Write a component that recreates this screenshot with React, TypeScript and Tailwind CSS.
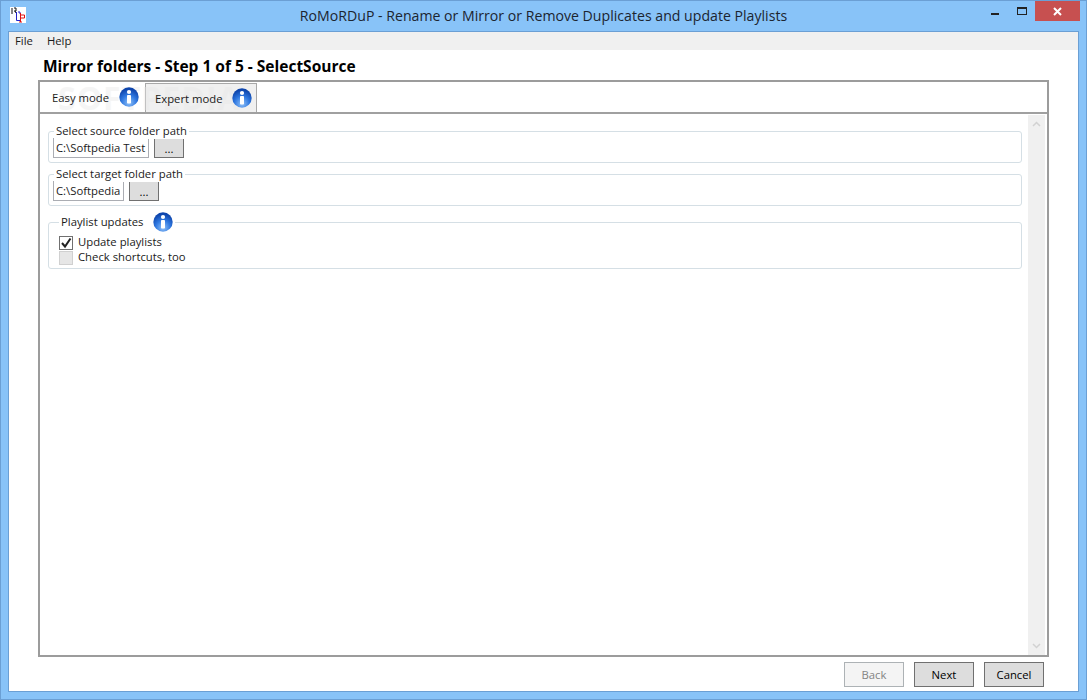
const font = "font-['Open_Sans','Noto_Sans',sans-serif]";

function Info({ className = "" }: { className?: string }) {
  return (
    <svg width="20" height="20" viewBox="0 0 20 20" className={className}>
      <defs>
        <radialGradient id="ig" cx="50%" cy="80%" r="70%">
          <stop offset="0%" stopColor="#8fc0f7" />
          <stop offset="55%" stopColor="#2f78e0" />
          <stop offset="100%" stopColor="#0f46ad" />
        </radialGradient>
      </defs>
      <circle cx="10" cy="10" r="9.7" fill="url(#ig)" />
      <circle cx="10" cy="5" r="2.1" fill="#fff" />
      <rect x="8" y="8" width="4" height="8.5" rx="0.8" fill="#fff" />
    </svg>
  );
}

function Btn({ children, disabled, className = "" }: { children: string; disabled?: boolean; className?: string }) {
  return (
    <div
      className={`flex items-center justify-center border ${
        disabled ? "border-[#adb2b5] bg-[#f4f4f4] text-[#838383]" : "border-[#707070] bg-[#dddddd] text-black"
      } ${className}`}
    >
      {children}
    </div>
  );
}

function Group({ title, path, inputW }: { title: string; path: string; inputW: string }) {
  return (
    <div className="relative h-[32px] rounded-[3px] border border-[#d5dfe5]">
      <span className="absolute left-[5px] top-[-9px] bg-white px-[2px] leading-[16px]">{title}</span>
      <div className="ml-[4px] mt-[6px] flex h-[20px] gap-[5px]">
        <div className={`flex h-[20px] items-center overflow-hidden border border-[#abadb3] pl-[2px] pt-[1px] whitespace-nowrap ${inputW}`}>{path}</div>
        <Btn className="h-[20px] w-[30px] pt-[2px]">...</Btn>
      </div>
    </div>
  );
}

export default function App() {
  return (
    <div className={`${font} flex h-[700px] w-[1087px] flex-col border border-[#6b9fd4] bg-[#88c3f8] text-[11.3px] text-[#1a1a1a]`}>
      <div className="relative flex h-[30px] shrink-0 items-center justify-center">
        <div className="absolute left-[9px] top-[6px] flex h-[16px] w-[16px] items-center justify-center bg-white">
          <svg width="16" height="16" viewBox="0 0 16 16" fill="none" strokeWidth="1">
            <path d="M2 1v6M4 1h2v3h-2M5 4l1 2" stroke="#111" />
            <path d="M6.5 5v8.5h4M8 5h2v2" stroke="#2222cc" />
            <path d="M10.5 6v9M9 15h3M10.5 8h4v3h-4" stroke="#e01010" />
          </svg>
        </div>
        <span className="text-[14.13px] text-[#1c2530]">RoMoRDuP - Rename or Mirror or Remove Duplicates and update Playlists</span>
        <div className="absolute right-[6px] top-0 flex items-start">
          <svg width="8" height="3" className="mr-[18px] mt-[12px]">
            <rect width="8" height="2" fill="#222" />
          </svg>
          <svg width="10" height="9" className="mr-[8px] mt-[6px]" fill="none">
            <rect x="0.5" y="0.5" width="9" height="7" stroke="#222" />
            <rect x="0" y="0" width="10" height="2" fill="#222" />
          </svg>
          <div className="flex h-[20px] w-[45px] items-center justify-center bg-[#c75050]">
            <svg width="9" height="9" stroke="#fff" strokeWidth="2">
              <path d="M1 1l7 7M8 1l-7 7" />
            </svg>
          </div>
        </div>
      </div>

      <div className="mx-[7px] mb-[7px] flex min-h-0 flex-1 flex-col border border-[#6b9fd4] bg-white">
        <div className="flex h-[18px] shrink-0 items-center gap-[14px] bg-[#f0f0f0] pl-[6px]">
          <span>File</span>
          <span>Help</span>
        </div>
        <div className="flex min-h-0 flex-1 flex-col pl-[29px] pr-[29px]">
          <div className="mt-[7px] h-[23px] shrink-0 pl-[5px] text-[15.5px] font-bold leading-[19px] text-black">
            Mirror folders - Step 1 of 5 - SelectSource
          </div>
          <div className="relative flex min-h-0 flex-1 flex-col border-2 border-[#9c9c9c] bg-white">
            <div className="flex h-[30px] shrink-0 items-start">
              <div className="flex h-[30px] w-[105px] items-center pl-[12px]">
                <span className="relative z-10 pt-[2px]">Easy mode</span>
                <Info className="relative z-10 ml-[10px]" />
              </div>
              <div className="mt-[1px] flex h-[30px] w-[112px] items-center border border-[#a8a8a8] bg-[#f0f0f0] pl-[9px]">
                <span className="relative z-10 pt-[2px]">Expert mode</span>
                <Info className="relative z-10 ml-[9px]" />
              </div>
            </div>
            <span className="pointer-events-none absolute left-[18px] top-[-2px] text-[32px] font-bold leading-[36px] tracking-[1px] whitespace-nowrap text-[#e8e8e8] opacity-40">
              SOFTPEDIA
            </span>
            <div className="flex min-h-0 flex-1 border-t-2 border-[#a0a0a0]">
              <div className="flex flex-1 flex-col gap-[11px] pl-[8px] pr-[6px] pt-[17px]">
                <Group title="Select source folder path" path="C:\Softpedia Test" inputW="w-[96px]" />
                <Group title="Select target folder path" path="C:\Softpedia" inputW="w-[71px]" />
                <div className="relative mt-[5px] h-[47px] rounded-[3px] border border-[#d5dfe5]">
                  <div className="absolute left-[10px] top-[-11px] flex items-center gap-[10px] bg-white px-[2px]">
                    <span>Playlist updates</span>
                    <Info />
                  </div>
                  <div className="flex flex-col pl-[10px] pt-[12px]">
                    <div className="flex h-[15px] items-center gap-[5px]">
                      <div className="flex h-[14px] w-[14px] items-center justify-center border border-[#707070] bg-white">
                        <svg width="12" height="12" fill="none" stroke="#222" strokeWidth="2">
                          <path d="M2 6l3 3.5L10.5 1.5" />
                        </svg>
                      </div>
                      <span>Update playlists</span>
                    </div>
                    <div className="flex h-[15px] items-center gap-[5px]">
                      <div className="h-[14px] w-[14px] border border-[#d0d0d0] bg-[#e6e6e6]" />
                      <span>Check shortcuts, too</span>
                    </div>
                  </div>
                </div>
              </div>
              <div className="mr-[2px] mt-[1px] flex w-[17px] flex-col items-center justify-between bg-[#f0f0f0] py-[6px]">
                <svg width="9" height="6" fill="none" stroke="#d2d2d2" strokeWidth="1.5">
                  <path d="M1 5l3.5-3.5L8 5" />
                </svg>
                <svg width="9" height="6" fill="none" stroke="#d2d2d2" strokeWidth="1.5">
                  <path d="M1 1l3.5 3.5L8 1" />
                </svg>
              </div>
            </div>
          </div>
          <div className="flex h-[34px] shrink-0 items-start justify-end gap-[10px] pr-[5px] pt-[5px]">
            <Btn disabled className="h-[25px] w-[60px] pt-[1px]">Back</Btn>
            <Btn className="h-[25px] w-[60px] pt-[1px]">Next</Btn>
            <Btn className="h-[25px] w-[60px] pt-[1px]">Cancel</Btn>
          </div>
        </div>
      </div>
    </div>
  );
}
